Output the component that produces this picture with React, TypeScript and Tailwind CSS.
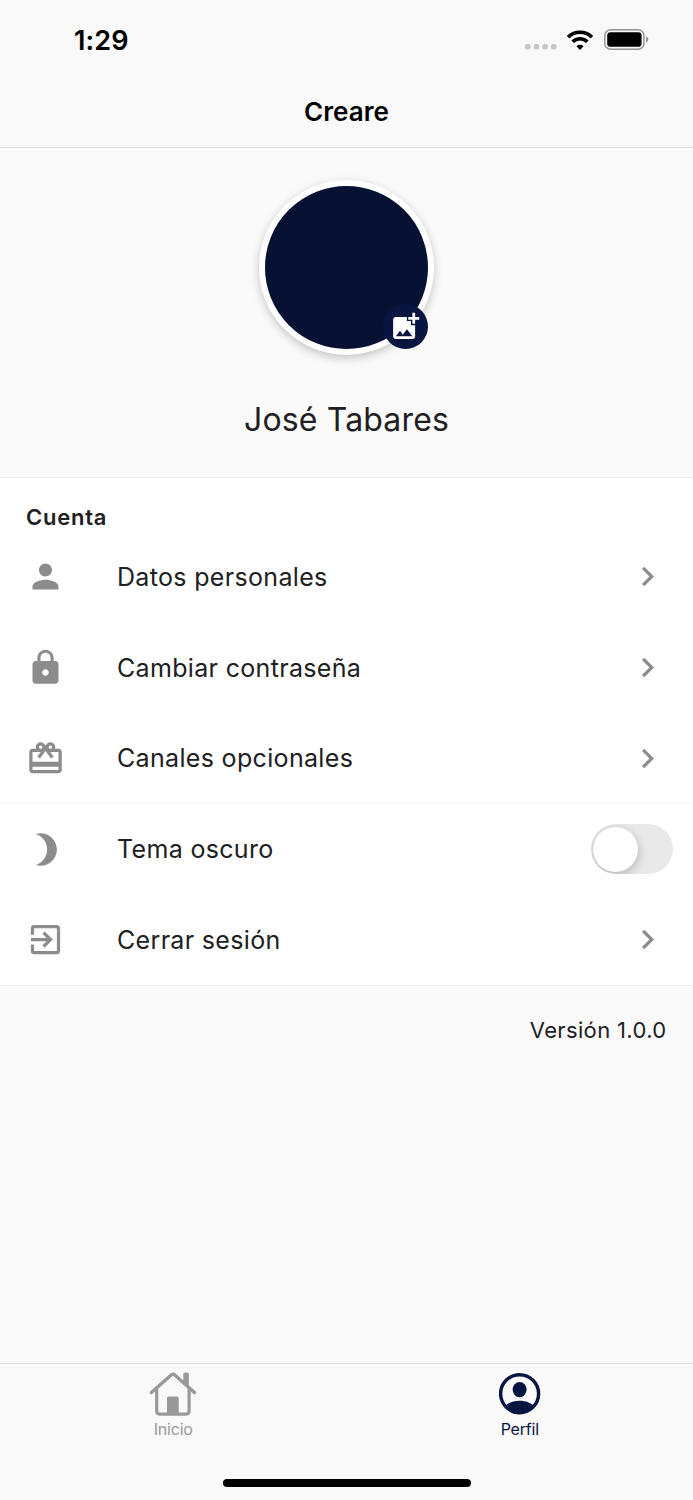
import type { ReactNode } from "react";
import type { IconType } from "react-icons";
import {
  MdAddPhotoAlternate,
  MdBrightness3,
  MdChevronRight,
  MdExitToApp,
  MdLock,
  MdPerson,
  MdRedeem
} from "react-icons/md";

function StatusBar() {
  return (
    <div className="flex h-20 items-center justify-between pl-[74px] pr-[43px] text-black">
      <span className="text-[27px] font-semibold leading-none tracking-[0.1px]">1:29</span>
      <div className="flex items-center">
        <svg width="32" height="6" className="mt-[13px]" fill="#c6c6c6">
          <rect x="0" width="5.5" height="5.5" rx="1.8" />
          <rect x="8.7" width="5.5" height="5.5" rx="1.8" />
          <rect x="17.3" width="5.5" height="5.5" rx="1.8" />
          <rect x="26" width="5.5" height="5.5" rx="1.8" />
        </svg>
        <svg width="28" height="20" viewBox="0 0 28 20" className="ml-[9px]" fill="none" stroke="#000">
          <path d="M2.1 7.1a17 17 0 0 1 23.8 0" strokeWidth="3.7" />
          <path d="M6.6 11.8a10.6 10.6 0 0 1 14.8 0" strokeWidth="3.6" />
          <path d="M14 20l-3.6-3.7a5.2 5.2 0 0 1 7.2 0z" fill="#000" stroke="none" />
        </svg>
        <svg width="46" height="22" viewBox="0 0 46 22" className="ml-[10px]">
          <rect x="0.8" y="0.8" width="39.2" height="19.4" rx="5.8" fill="none" stroke="#949494" strokeWidth="1.5" />
          <rect x="3.2" y="3.2" width="34.4" height="14.6" rx="3.4" fill="#000" />
          <path d="M42 7.5c3 1 3 5 0 6z" fill="#949494" />
        </svg>
      </div>
    </div>
  );
}

function Row({ icon: Icon, label, children }: { icon: IconType; label: string; children?: ReactNode }) {
  return (
    <div className="flex h-[90.75px] items-center pl-[26px]">
      <Icon size={39} color="#8c8c8c" className="shrink-0" />
      <span className="ml-[52px] flex-1 pt-px text-[25px] leading-none tracking-[0.33px]">{label}</span>
      {children ?? <MdChevronRight size={39} color="#8c8c8c" className="mr-[26px]" />}
    </div>
  );
}

function Toggle() {
  return (
    <button
      type="button"
      role="switch"
      aria-checked="false"
      className="mr-[20px] flex h-[50px] w-[82px] items-center overflow-hidden rounded-full bg-[#e9e9e9] pl-[2px]"
    >
      <span className="size-[45px] rounded-full bg-white shadow-[0_3px_10px_1px_rgba(0,0,0,0.2)]" />
    </button>
  );
}

function HomeIcon() {
  return (
    <svg width="48" height="46" viewBox="0 0 48 46" fill="none" stroke="currentColor" strokeLinecap="round" strokeLinejoin="round">
      <path d="M2.4 21.6 22.2 4Q24 2.4 25.8 4L45.4 21.6" strokeWidth="3.4" />
      <path d="M7.7 18.5v21.6q0 3 3 3h26.4q3 0 3-3V18.5" strokeWidth="3.2" />
      <path d="M34.3 12V3.4q0-1.8 1.8-1.8h2q1.8 0 1.8 1.8V17z" fill="currentColor" stroke="none" />
      <path d="M18 43V27q0-1.6 1.6-1.6h8.5q1.6 0 1.6 1.6V43z" fill="currentColor" stroke="none" />
    </svg>
  );
}

function ProfileIcon() {
  return (
    <svg width="42" height="42" viewBox="0 0 42 42" fill="currentColor">
      <circle cx="20.6" cy="20.7" r="19" fill="none" stroke="currentColor" strokeWidth="3.4" />
      <ellipse cx="20.6" cy="16.6" rx="7" ry="7.6" />
      <path d="M5.8 34C8.6 29.8 14.6 27.8 20.6 27.8S32.6 29.8 35.4 34C31.6 38.4 26.6 40.8 20.6 40.8S9.6 38.4 5.8 34z" />
    </svg>
  );
}

export default function App() {
  return (
    <main className="flex h-[1500px] w-full flex-col bg-[#fafafa] font-['Inter',sans-serif] text-[#202022]">
      <header className="h-[148px] border-b border-[#e2e2e2] bg-[#f9f9f9]">
        <StatusBar />
        <h1 className="pt-4 text-center text-[26px] font-semibold leading-8 tracking-[0.1px] text-black">Creare</h1>
      </header>

      <section className="flex h-[329px] flex-col items-center pt-8">
        <div className="relative size-[175px] rounded-full border-[6px] border-white bg-[#061133] shadow-[0_3px_10px_rgba(0,0,0,0.22)]">
          <div className="absolute bottom-[0.5px] right-[0.5px] flex size-[45px] items-center justify-center rounded-full bg-[#091541]">
            <MdAddPhotoAlternate size={33} color="#fff" />
          </div>
        </div>
        <h2 className="mt-[45px] text-[32px] leading-10 tracking-[0.15px]">José Tabares</h2>
      </section>

      <section className="border-y border-[#eeeeee] bg-white">
        <h3 className="h-[53.5px] pl-[26px] pt-[27px] text-[22px] font-semibold leading-6 tracking-[0.75px]">Cuenta</h3>
        <Row icon={MdPerson} label="Datos personales" />
        <Row icon={MdLock} label="Cambiar contraseña" />
        <Row icon={MdRedeem} label="Canales opcionales" />
        <div className="-mt-px h-px bg-[#f3f3f3]" />
        <Row icon={MdBrightness3} label="Tema oscuro">
          <Toggle />
        </Row>
        <Row icon={MdExitToApp} label="Cerrar sesión" />
      </section>

      <p className="pr-[26.5px] pt-8 text-right text-[22px] leading-6 tracking-[0.35px]">Versión 1.0.0</p>

      <footer className="mt-auto h-[137px] border-t border-[#e2e2e2] bg-[#f9f9f9]">
        <nav className="grid h-[115px] grid-cols-2">
          <a className="flex flex-col items-center pt-[7px] text-[#999999]">
            <HomeIcon />
            <span className="mt-[2px] text-[16px] leading-5 tracking-[-0.2px]">Inicio</span>
          </a>
          <a className="flex flex-col items-center pt-[9px] text-[#091541]">
            <ProfileIcon />
            <span className="mt-1 text-[16px] leading-5 tracking-[-0.2px]">Perfil</span>
          </a>
        </nav>
        <div className="mx-auto h-2 w-[248px] rounded-full bg-black" />
      </footer>
    </main>
  );
}
